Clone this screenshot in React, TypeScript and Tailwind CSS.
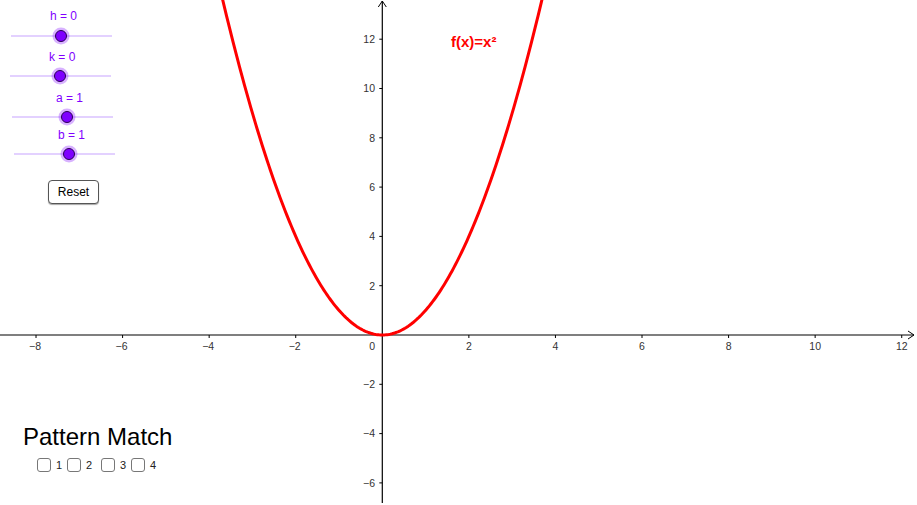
import React from "react";

const OX = 382.3;
const OY = 335;
const SX = 43.285;
const SY = 24.65;

function curvePath() {
  const pts: string[] = [];
  for (let i = 0; i <= 200; i++) {
    const x = -3.75 + (7.5 * i) / 200;
    const px = OX + x * SX;
    const py = OY - x * x * SY;
    pts.push(`${i === 0 ? "M" : "L"}${px.toFixed(2)} ${py.toFixed(2)}`);
  }
  return pts.join(" ");
}

const xTicks = [-8, -6, -4, -2, 2, 4, 6, 8, 10, 12];
const yTicks = [-6, -4, -2, 2, 4, 6, 8, 10, 12];

function fmt(n: number) {
  return n < 0 ? `\u2212${-n}` : `${n}`;
}

function Slider({ label, labelX, labelY, lineX1, lineX2, lineY, knobX }: { label: string; labelX: number; labelY: number; lineX1: number; lineX2: number; lineY: number; knobX: number }) {
  return (
    <>
      <div
        className="absolute text-[12px] leading-none text-[#7f00ff] whitespace-nowrap"
        style={{ left: labelX, top: labelY - 6 }}
      >
        {label}
      </div>
      <svg className="absolute left-0 top-0 pointer-events-none" width={917} height={505}>
        <line x1={lineX1} y1={lineY} x2={lineX2} y2={lineY} stroke="#c7a3ff" strokeWidth={1} />
        <circle cx={knobX} cy={lineY} r={8.5} fill="#7f00ff" fillOpacity={0.3} />
        <circle cx={knobX} cy={lineY} r={5.5} fill="#7f00ff" stroke="#2a0055" strokeWidth={1} />
      </svg>
    </>
  );
}

function Box({ label, extra }: { label: string; extra?: boolean }) {
  return (
    <div className={`flex items-center gap-[5px] ${extra ? "ml-[4px]" : ""}`}>
      <div className="w-[14px] h-[14px] rounded-[3px] border-[1.5px] border-[#777] bg-white" />
      <span className="w-[6px] text-[11px] leading-none text-[#222]">{label}</span>
    </div>
  );
}

export default function App() {
  return (
    <div className="relative w-[917px] h-[505px] bg-white overflow-hidden" style={{ fontFamily: '"Liberation Sans", Arial, sans-serif' }}>
      <svg className="absolute left-0 top-0" width={917} height={505}>
        <line x1={0} y1={OY} x2={914} y2={OY} stroke="#000" strokeWidth={1.2} />
        <polyline points={`908,${OY - 4} 914,${OY} 908,${OY + 4}`} fill="none" stroke="#000" strokeWidth={1} />
        <line x1={OX} y1={1} x2={OX} y2={503} stroke="#000" strokeWidth={1.2} />
        <polyline points={`${OX - 4},7 ${OX},1 ${OX + 4},7`} fill="none" stroke="#000" strokeWidth={1} />
        {xTicks.map((t) => {
          const px = OX + t * SX;
          return (
            <g key={`x${t}`}>
              <line x1={px} y1={OY} x2={px} y2={OY + 3} stroke="#000" strokeWidth={1} />
              <text x={px + (t < 0 ? -1 : 0)} y={349.5} fontSize={10.5} fill="#333" textAnchor="middle" fontFamily='"Liberation Sans", Arial, sans-serif'>
                {fmt(t)}
              </text>
            </g>
          );
        })}
        <text x={375} y={349.5} fontSize={10.5} fill="#333" textAnchor="end" fontFamily='"Liberation Sans", Arial, sans-serif'>
          0
        </text>
        {yTicks.map((t) => {
          const py = OY - t * SY;
          return (
            <g key={`y${t}`}>
              <line x1={OX - 3} y1={py} x2={OX} y2={py} stroke="#000" strokeWidth={1} />
              <text x={375} y={py + 3.8} fontSize={10.5} fill="#333" textAnchor="end" fontFamily='"Liberation Sans", Arial, sans-serif'>
                {fmt(t)}
              </text>
            </g>
          );
        })}
        <path d={curvePath()} fill="none" stroke="#ff0000" strokeWidth={3} strokeLinejoin="round" />
      </svg>

      <div className="absolute left-[451px] top-[34px] text-[15px] font-bold leading-none text-[#ff0000] whitespace-nowrap">
        f(x)=x²
      </div>

      <Slider label="h = 0" labelX={50} labelY={16} lineX1={11} lineX2={112} lineY={36} knobX={61} />
      <Slider label="k = 0" labelX={49} labelY={57} lineX1={10} lineX2={111} lineY={76} knobX={60} />
      <Slider label="a = 1" labelX={56} labelY={98} lineX1={12} lineX2={113} lineY={117} knobX={67} />
      <Slider label="b = 1" labelX={58} labelY={135} lineX1={14} lineX2={115} lineY={154} knobX={69} />

      <button className="absolute left-[48px] top-[180px] w-[51px] h-[24px] rounded-[4px] border-[1.5px] border-[#555] bg-white text-[12px] text-black leading-none shadow-[0_1px_1px_rgba(0,0,0,0.35)]">
        Reset
      </button>

      <div className="absolute left-[23px] top-[425px] flex flex-col gap-[9px]">
        <div className="text-[24px] leading-none text-black whitespace-nowrap">Pattern Match</div>
        <div className="flex gap-[5px] pl-[14px]">
          <Box label="1" />
          <Box label="2" />
          <Box label="3" extra />
          <Box label="4" />
        </div>
      </div>
    </div>
  );
}
